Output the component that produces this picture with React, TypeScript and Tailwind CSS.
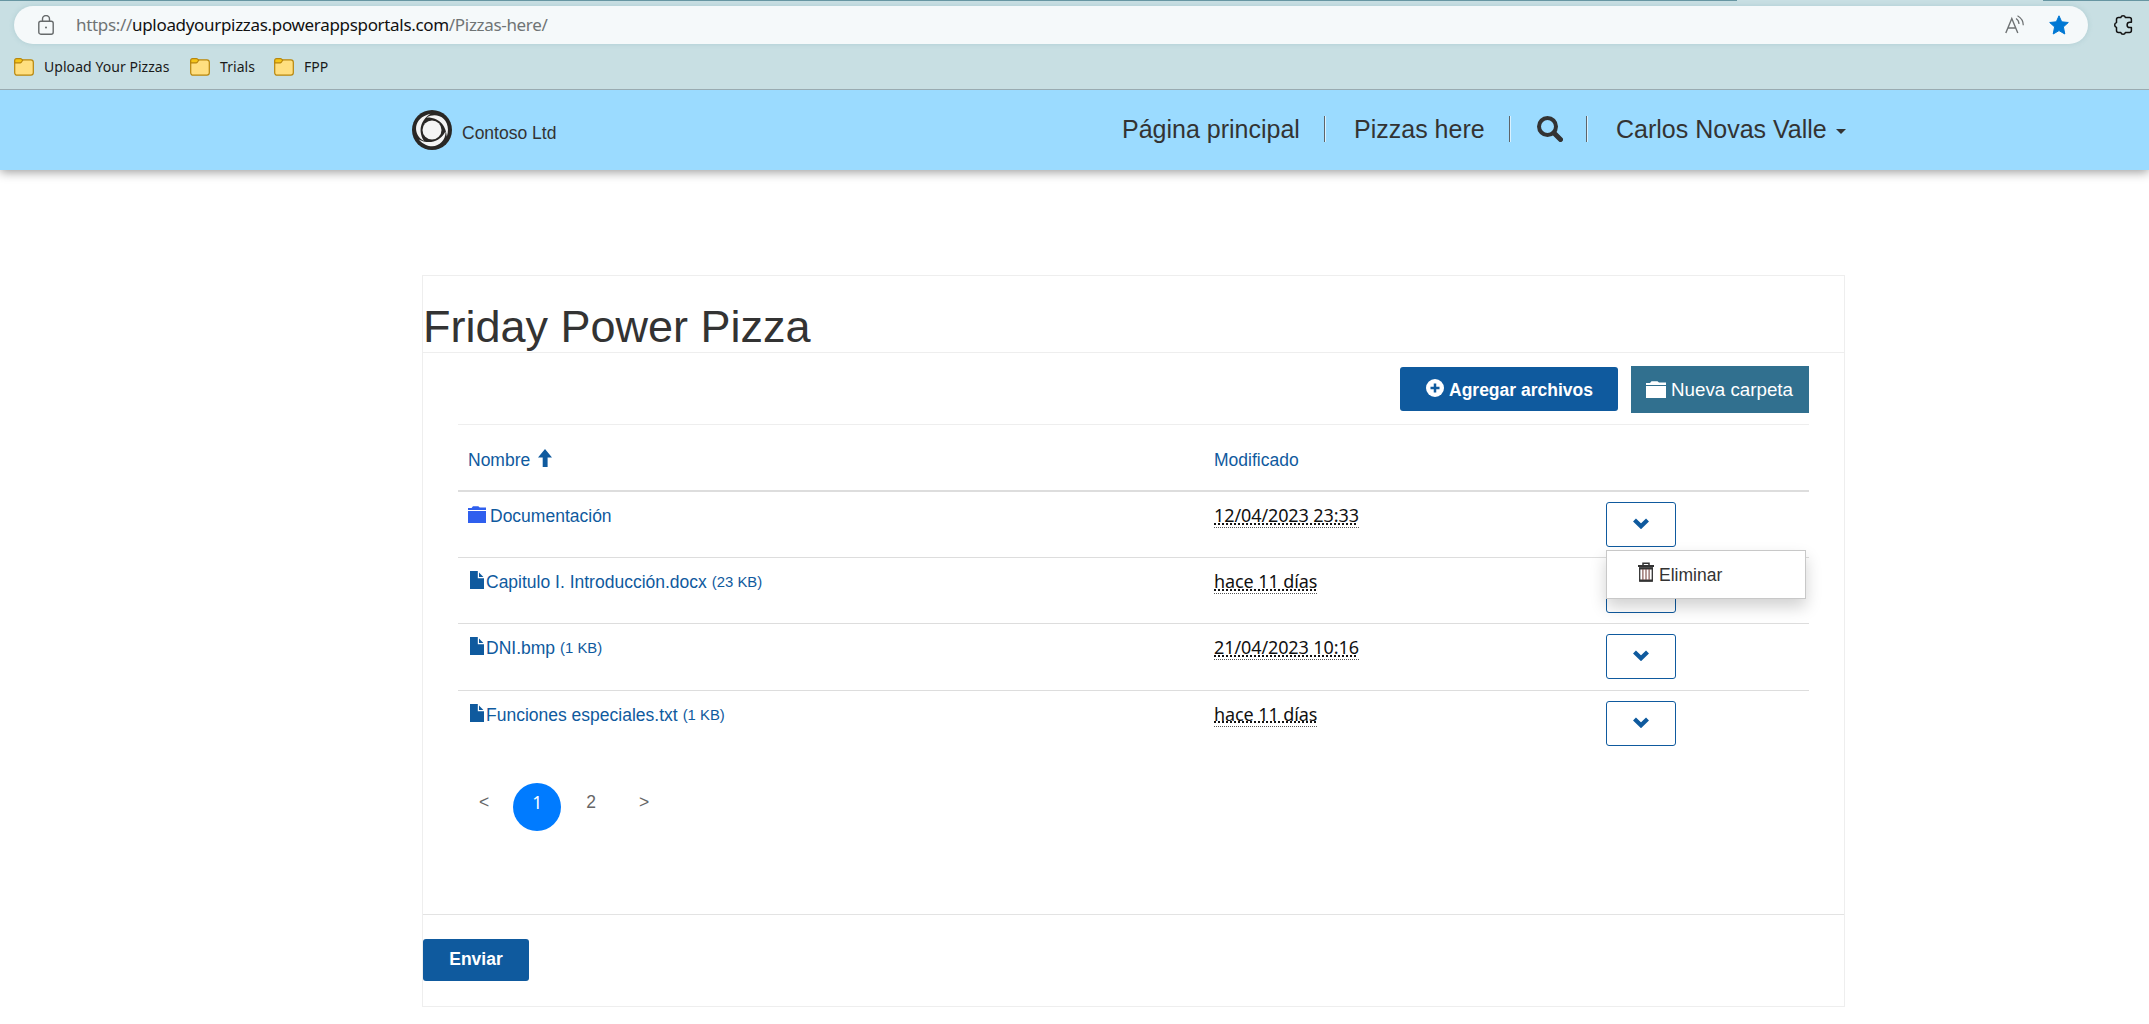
import type { ReactNode } from 'react'

type FileRow = { name: string; size?: string; modified: string; kind: 'folder' | 'file' }

const rows: FileRow[] = [
  { name: 'Documentación', modified: '12/04/2023 23:33', kind: 'folder' },
  { name: 'Capitulo I. Introducción.docx', size: '(23 KB)', modified: 'hace 11 días', kind: 'file' },
  { name: 'DNI.bmp', size: '(1 KB)', modified: '21/04/2023 10:16', kind: 'file' },
  { name: 'Funciones especiales.txt', size: '(1 KB)', modified: 'hace 11 días', kind: 'file' },
]

const bookmarks = [
  { label: 'Upload Your Pizzas', width: 'w-[125px]' },
  { label: 'Trials', width: 'w-[33px]' },
  { label: 'FPP', width: 'w-[26px]' },
]

function FolderIcon({ className }: { className: string }) {
  return (
    <svg viewBox="0 0 20 17" preserveAspectRatio="none" className={className} fill="currentColor">
      <path d="M0 4V2h4L5.500.2h6L13 1.500h7V4z" />
      <path d="M0 5h20v12H0z" />
    </svg>
  )
}

function FileIcon() {
  return (
    <svg viewBox="0 0 14 18" className="h-[18px] w-[14px]" fill="#0f5a9e">
      <path d="M0 0h7.800v7.200H14V18H0z" />
      <path d="M9 1.600 13.400 6H9z" />
    </svg>
  )
}

function BookmarkFolder() {
  return (
    <svg viewBox="0 0 20 18" className="h-[18px] w-5" stroke="#b8860b" strokeWidth="1.2">
      <path d="M.7 3v11.800a2.400 2.400 0 0 0 2.400 2.400h13.800a2.400 2.400 0 0 0 2.400-2.400V4.200a2.400 2.400 0 0 0-2.400-2.400H9z" fill="#ffdf80" />
      <path d="M.7 4.800V2.600A1.900 1.900 0 0 1 2.600.7h3.900c.8 0 1.500.7 2.200 1.600C8 3.600 7.200 4.800 6.200 4.800z" fill="#f5c518" />
    </svg>
  )
}

function ContosoLogo() {
  return (
    <svg viewBox="0 0 40 40" className="h-10 w-10">
      <circle cx="20" cy="20" r="20" fill="#292725" />
      <circle cx="20" cy="20" r="9.500" fill="#f4f4f4" />
      {[0, 120, 240].map((angle) => (
        <path key={angle} d="M12 31C1 25.500 0 8 18.500 3.800C11 8.500 4.500 18.500 12 31z" fill="#f4f4f4" transform={`rotate(${angle} 20 20)`} />
      ))}
    </svg>
  )
}

function Divider() {
  return <span className="h-[26px] w-0.5 border-l border-r border-l-[#5e6468] border-r-[#d9f1ff]" />
}

function BrowserChrome() {
  return (
    <div className="relative z-10 h-[90px] border-b border-[#9aabb1] bg-[#c8dfe3] font-['Noto_Sans',sans-serif]">
      <div className="flex h-px justify-between">
        <span className="w-[1737px] bg-[#6796a2]" />
        <span className="w-[106px] bg-[#6796a2]" />
      </div>
      <div className="mt-[5px] flex items-center">
        <div className="ml-3.5 flex h-[38px] w-[2074px] items-center rounded-full bg-[#f5f9fa] shadow-[0_0_5px_rgba(100,150,160,0.25)]">
          <svg viewBox="0 0 16 20" className="ml-6 h-5 w-4" fill="none" stroke="#666a6b" strokeWidth="1.4">
            <rect x=".8" y="6.200" width="14.400" height="13" rx="2" />
            <path d="M4.500 6V4a3.500 3.500 0 0 1 7 0v2" />
            <circle cx="8" cy="12.500" r="1" fill="#666a6b" stroke="none" />
          </svg>
          <div className="ml-[22px] whitespace-nowrap text-[17px] leading-6 tracking-[-0.32px] text-[#6f7475]">
            https://<span className="text-[#111]">uploadyourpizzas.powerappsportals.com</span>/Pizzas-here/
          </div>
          <svg viewBox="0 0 20 20" className="ml-auto h-5 w-5" fill="none" stroke="#6e7273" strokeWidth="1.4">
            <path d="M.8 18 6.800 3.500 12.800 18M3 13h7.600" />
            <path d="M11 3.500c2 1.300 3 3.200 3 5.500M12.500.7c4 2.300 5.800 5.500 5.800 9.500" strokeWidth="1.2" />
          </svg>
          <svg viewBox="0 0 20 20" className="ml-6 mr-[19px] h-5 w-5" fill="#0078d4" stroke="#0078d4" strokeLinejoin="round">
            <path d="m10 .8 2.700 6 6.600.7-4.900 4.400 1.400 7.100-5.800-3.400L4.200 19l1.400-7.100L.7 7.500l6.600-.7z" />
          </svg>
        </div>
        <svg viewBox="0 0 20 20" className="ml-[25px] h-5 w-5" fill="none" stroke="#111" strokeWidth="1.5" strokeLinejoin="round">
          <path d="M5.500 2.500h2.300a2.400 2.400 0 0 1 4.600 0h4c1.200 0 2 .8 2 2v2.700h-1.600a2.700 2.700 0 0 0 0 5.400h1.600v2.900c0 1.200-.8 2-2 2h-4a2.400 2.400 0 0 1-4.600 0H5.500c-1.200 0-2-.8-2-2v-3.100a2.500 2.500 0 0 1 0-4.800V4.500c0-1.200.8-2 2-2z" />
        </svg>
      </div>
      <div className="mt-3.5 flex h-[18px] items-center gap-[21px] pl-3.5">
        {bookmarks.map((b) => (
          <div key={b.label} className="flex items-center gap-2.5">
            <BookmarkFolder />
            <span className={`${b.width} whitespace-nowrap text-[14px] leading-[18px] tracking-[0.05px] text-[#1a1a1a]`}>{b.label}</span>
          </div>
        ))}
      </div>
    </div>
  )
}

function NavBar() {
  return (
    <nav className="relative flex h-20 items-center bg-[#9bdbff] pl-[412px] text-[#333] shadow-[0_2px_10px_rgba(0,0,0,0.4)]">
      <ContosoLogo />
      <span className="ml-2.5 mt-1.5 w-[94px] whitespace-nowrap text-[17.5px]">Contoso Ltd</span>
      <div className="mb-0.5 ml-[566px] flex items-center text-[25px] leading-[30px]">
        <span className="w-[202px]">Página principal</span>
        <Divider />
        <span className="ml-7 w-[155px]">Pizzas here</span>
        <Divider />
        <svg viewBox="0 0 26 26" className="ml-[26px] h-[26px] w-[26px]" fill="none" stroke="#333">
          <circle cx="10.500" cy="10.500" r="8.500" strokeWidth="4" />
          <path d="m17 17 6.500 6.500" strokeWidth="5" strokeLinecap="round" />
        </svg>
        <span className="ml-[23px] flex">
          <Divider />
        </span>
        <span className="ml-[28px]">Carlos Novas Valle</span>
        <span className="ml-[9px] mt-1 border-x-[5px] border-t-[5px] border-x-transparent border-t-[#333]" />
      </div>
    </nav>
  )
}

function Cell({ children }: { children: ReactNode }) {
  return <div className="pt-3.5 text-[17.5px] leading-5 text-[#0f5a9e]">{children}</div>
}

function DeleteMenu() {
  return (
    <div className="absolute left-0 top-12 z-10 flex h-[49px] w-[200px] items-center border border-[#c8c8c8] bg-white pl-[31px] shadow-[0_8px_15px_rgba(0,0,0,0.18)]">
      <svg viewBox="0 0 16 20" className="mb-1.5 h-5 w-4" fill="none" stroke="#333">
        <path d="M5 3V1.200h6V3" strokeWidth="1.5" />
        <path d="M0 4h16" strokeWidth="2" />
        <path d="M1.700 6v13h12.600V6z" strokeWidth="1.3" />
        <path d="M1 6.500h14M1.500 18.500h13" strokeWidth="1.8" />
        <path d="M4.900 7v11M8 7v11M11.100 7v11" stroke="#7a4a44" strokeWidth="1.1" />
      </svg>
      <span className="ml-[5px] mt-0.5 text-[17.5px] text-[#333]">Eliminar</span>
    </div>
  )
}

function FileTable() {
  return (
    <div>
      <div className="grid h-[67px] grid-cols-[746px_392px_1fr] border-b-2 border-[#ddd] pl-2.5 pt-[25px] text-[17.5px] leading-5 text-[#0f5a9e]">
        <div className="flex">
          Nombre
          <svg viewBox="0 0 14 18" className="-mt-px ml-2 h-[18px] w-3.5" fill="currentColor">
            <path d="m7 0 7 8.500H9.600V18H4.700V8.500H0z" />
          </svg>
        </div>
        <div>Modificado</div>
      </div>
      {rows.map((row, i) => (
        <div
          key={row.name}
          className="grid h-[66.2px] grid-cols-[746px_392px_1fr] border-b border-[#ddd] pl-2.5 last:border-b-0"
        >
          <Cell>
            <div className="flex whitespace-pre">
              {row.kind === 'folder' ? (
                <span className="mr-1 text-[#2f5fee]">
                  <FolderIcon className="h-[17px] w-[18px]" />
                </span>
              ) : (
                <span className="-mt-px mr-0.5 pl-0.5">
                  <FileIcon />
                </span>
              )}
              {row.name}
              {row.size && <span className="ml-[5px] text-[14.875px] leading-[21px]">{row.size}</span>}
            </div>
          </Cell>
          <div className="pt-3">
            <span className="inline-block h-6 whitespace-nowrap border-b border-dotted border-[#555] font-['Noto_Sans',sans-serif] text-[18px] leading-[23px] tracking-[-0.1px] text-[#111] underline decoration-dotted decoration-2 underline-offset-1 [text-decoration-skip-ink:none]">
              {row.modified}
            </span>
          </div>
          <div className="pt-2.5">
            <div className="relative w-[70px]">
              <button type="button" className="flex h-[45px] w-full items-center justify-center rounded-[3px] border border-[#0f5a9e] bg-white">
                <svg viewBox="0 0 16 11" className="mb-0.5 h-[11px] w-4" fill="none" stroke="#0f5a9e" strokeWidth="4.2">
                  <path d="m1.500 2 6.500 6.300L14.500 2" />
                </svg>
              </button>
              {i === 0 && <DeleteMenu />}
            </div>
          </div>
        </div>
      ))}
    </div>
  )
}

export default function App() {
  return (
    <div className="h-[1024px] w-[2149px] overflow-hidden bg-white font-['Liberation_Sans',Arial,sans-serif]">
      <BrowserChrome />
      <NavBar />
      <main className="ml-[422px] mt-[105px] h-[732px] w-[1423px] border border-[#eee]">
        <h1 className="h-[77px] border-b border-[#eee] pt-6 text-[45px] leading-[54px] text-[#333]">Friday Power Pizza</h1>
        <div className="h-[562px] border-b border-[#e3e3e3] px-[35px]">
          <div className="flex h-[72px] justify-end gap-[13px] border-b border-[#eee] pt-[13px]">
            <button type="button" className="mt-px flex h-11 w-[218px] items-center rounded-[3px] bg-[#0f5a9e] pl-[26px] text-[17.5px] font-bold text-white">
              <svg viewBox="0 0 18 18" className="mb-0.5 h-[18px] w-[18px]">
                <circle cx="9" cy="9" r="9" fill="#fff" />
                <path d="M9 4.500v9M4.500 9h9" stroke="#0f5a9e" strokeWidth="2.5" />
              </svg>
              <span className="ml-[5px] mt-0.5">Agregar archivos</span>
            </button>
            <button type="button" className="flex h-[47px] w-[178px] items-center whitespace-nowrap bg-[#31708f] pl-[15px] text-[18.75px] text-white">
              <FolderIcon className="h-[17px] w-5" />
              <span className="ml-[5px] mt-0.5">Nueva carpeta</span>
            </button>
          </div>
          <FileTable />
          <div className="mt-[26px] flex items-start text-[17.5px] leading-5 text-[#666]">
            <span className="ml-[21px] mt-[9px]">&lt;</span>
            <span className="ml-6 flex h-12 w-12 justify-center rounded-full bg-[#007bff] pt-[9px] font-['Noto_Sans',sans-serif] text-white">1</span>
            <span className="ml-[25px] mt-[9px]">2</span>
            <span className="ml-[43px] mt-[9px]">&gt;</span>
          </div>
        </div>
        <button type="button" className="mt-6 h-[42px] w-[106px] rounded-[3px] bg-[#0f5a9e] pb-0.5 text-[17.5px] font-bold text-white">
          Enviar
        </button>
      </main>
    </div>
  )
}
